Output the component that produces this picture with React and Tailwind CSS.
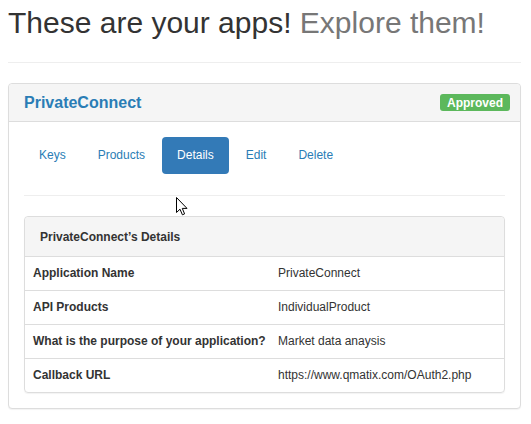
import React from "react";

const tabs = ["Keys", "Products", "Details", "Edit", "Delete"];

const details = [
  ["Application Name", "PrivateConnect"],
  ["API Products", "IndividualProduct"],
  ["What is the purpose of your application?", "Market data anaysis"],
  ["Callback URL", "https://www.qmatix.com/OAuth2.php"],
];

const Cursor = () => (
  <svg
    className="absolute left-[176px] top-[197px]"
    width="12"
    height="19"
    viewBox="0 0 12 19"
  >
    <path
      d="M0.5 0.5 L0.5 15.5 L4 12.2 L6.4 17.8 L8.6 16.9 L6.3 11.4 L11 11.4 Z"
      fill="#fff"
      stroke="#000"
      strokeWidth="1"
      strokeLinejoin="round"
    />
  </svg>
);

const App = () => {
  return (
    <div
      className="relative min-h-[424px] bg-white text-[#333] text-[12px]"
      style={{ fontFamily: '"Liberation Sans", Arial, sans-serif' }}
    >
      <div className="ml-2 mr-[10px] pt-[6px]">
        <h1 className="text-[30px] leading-[33px] font-normal">
          These are your apps!{" "}
          <span className="text-[#777]">Explore them!</span>
        </h1>
        <hr className="mt-[23px] mb-5 border-t border-[#eee]" />

        <div className="border border-[#ddd] rounded bg-white shadow-[0_1px_1px_rgba(0,0,0,0.05)]">
          <div className="flex items-center justify-between h-[38px] pl-[15px] pr-[10px] bg-[#f5f5f5] border-b border-[#ddd] rounded-t">
            <span className="text-[16px] font-bold text-[#2a7db5]">
              PrivateConnect
            </span>
            <span className="h-[17px] px-[7px] flex items-center rounded-[3px] bg-[#5cb85c] text-white font-bold text-[12px]">
              Approved
            </span>
          </div>

          <div className="px-[15px] pt-[15px] pb-[15px]">
            <ul className="flex gap-[2px]">
              {tabs.map((tab) => (
                <li key={tab}>
                  <span
                    className={
                      tab === "Details"
                        ? "block px-[15px] py-[10px] leading-[17px] rounded bg-[#337ab7] text-white"
                        : "block px-[15px] py-[10px] leading-[17px] rounded text-[#2a7db5]"
                    }
                  >
                    {tab}
                  </span>
                </li>
              ))}
            </ul>

            <hr className="mt-[21px] mb-5 border-t border-[#eee]" />

            <div className="border border-[#ddd] rounded shadow-[0_1px_1px_rgba(0,0,0,0.05)]">
              <div className="h-[40px] flex items-center px-[15px] bg-[#f5f5f5] border-b border-[#ddd] rounded-t font-bold">
                PrivateConnect’s Details
              </div>
              <div>
                {details.map(([label, value], i) => (
                  <div
                    key={label}
                    className={
                      i === 0
                        ? "grid grid-cols-[245px_1fr] leading-[17px]"
                        : "grid grid-cols-[245px_1fr] leading-[17px] border-t border-[#ddd]"
                    }
                  >
                    <div className="p-2 font-bold whitespace-nowrap">{label}</div>
                    <div className="p-2 whitespace-nowrap">{value}</div>
                  </div>
                ))}
              </div>
            </div>
          </div>
        </div>
      </div>
      <Cursor />
    </div>
  );
};

export default App;
